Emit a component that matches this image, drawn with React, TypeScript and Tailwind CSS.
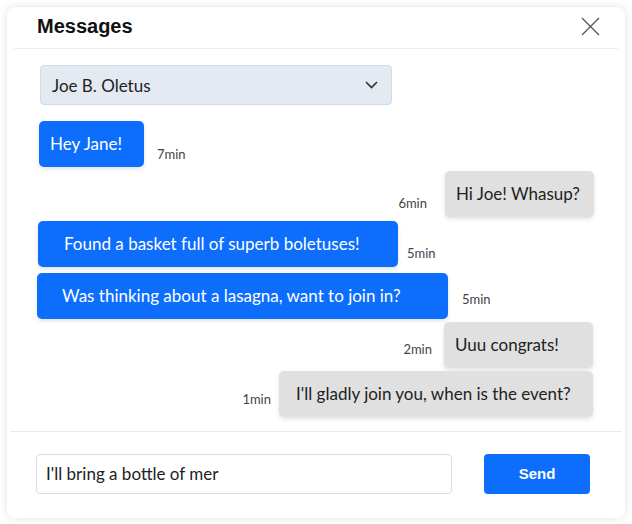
import React, { useState } from "react";

type Msg = {
  mine: boolean;
  text: string;
  time: string;
  box: string; // bubble width + padding
  row: string; // row offset + top margin
  timeCls: string; // gap + bottom offset for the time label
};

const messages: Msg[] = [
  { mine: true, text: "Hey Jane!", time: "7min", box: "w-[105px] pl-[11px]", row: "ml-[32px] mt-[16px]", timeCls: "ml-[13px] mb-[3px]" },
  { mine: false, text: "Hi Joe! Whasup?", time: "6min", box: "w-[149px] pl-[11px]", row: "mr-[31px] mt-[4px]", timeCls: "mr-[18px] mb-[4px]" },
  { mine: true, text: "Found a basket full of superb boletuses!", time: "5min", box: "w-[360px] pl-[26px]", row: "ml-[31px] mt-[4px]", timeCls: "ml-[9px] mb-[4px]" },
  { mine: true, text: "Was thinking about a lasagna, want to join in?", time: "5min", box: "w-[411px] pl-[25px]", row: "ml-[30px] mt-[6px]", timeCls: "ml-[14px] mb-[10px]" },
  { mine: false, text: "Uuu congrats!", time: "2min", box: "w-[149px] pl-[11px]", row: "mr-[32px] mt-[3px]", timeCls: "mr-[12px] mb-[9px]" },
  { mine: false, text: "I'll gladly join you, when is the event?", time: "1min", box: "w-[314px] pl-[17px]", row: "mr-[32px] mt-[3px]", timeCls: "mr-[8px] mb-[8px]" },
];

const font = "font-['Lato','Noto_Sans',sans-serif]";

const App = () => {
  const [draft, setDraft] = useState("I'll bring a bottle of mer");

  return (
    <div className="min-h-screen bg-white p-[7px]">
      <div className="w-[618px] h-[511px] bg-white rounded-lg shadow-[0_0_8px_rgba(0,0,0,0.12)] flex flex-col">
        {/* header */}
        <div className="h-[42px] mx-[7px] border-b border-[#eeeeee] flex items-center justify-between pl-[23px] pr-[18px]">
          <h1 className="font-['Liberation_Sans',Arial,sans-serif] font-bold text-[20px] text-[#111] leading-none pb-[4px]">
            Messages
          </h1>
          <button type="button" className="text-[#555] pb-[3px]">
            <svg width="19" height="19" viewBox="0 0 19 19" fill="none" stroke="currentColor" strokeWidth="1.3">
              <path d="M1 1L18 18M18 1L1 18" />
            </svg>
          </button>
        </div>

        {/* body */}
        <div className={`flex-1 flex flex-col ${font}`}>
          <div className="ml-[33px] mt-[16px] w-[352px] h-[40px] bg-[#e4eaf1] border border-[#d4dbe3] rounded-[4px] flex items-center justify-between pl-[11px] pr-[13px]">
            <span className="text-[17px] text-[#222] pt-[2px]">Joe B. Oletus</span>
            <svg width="13" height="8" viewBox="0 0 13 8" fill="none" stroke="#333" strokeWidth="1.6">
              <path d="M1 1L6.5 6.5L12 1" />
            </svg>
          </div>

          {messages.map((m, i) => (
            <div key={i} className={`flex items-end ${m.mine ? "justify-start" : "justify-end"} ${m.row}`}>
              {!m.mine && <span className={`text-[13px] text-[#444] ${m.timeCls}`}>{m.time}</span>}
              <div
                className={`h-[46px] flex items-center rounded-[5px] text-[17px] shadow-[0_2px_4px_rgba(0,0,0,0.12)] ${m.box} ${
                  m.mine ? "bg-[#0d6efd] text-white" : "bg-[#e0e0e0] text-[#222]"
                }`}
              >
                {m.text}
              </div>
              {m.mine && <span className={`text-[13px] text-[#444] ${m.timeCls}`}>{m.time}</span>}
            </div>
          ))}
        </div>

        {/* footer */}
        <div className="h-[87px] mx-[3px] border-t border-[#e9ecef] flex items-center pl-[26px] pb-[3px]">
          <input
            value={draft}
            onChange={(e) => setDraft(e.target.value)}
            className={`w-[416px] h-[40px] border border-[#d6dde5] rounded-[4px] px-[9px] text-[17px] text-[#222] outline-none ${font}`}
          />
          <button
            type="button"
            className="ml-[32px] w-[106px] h-[40px] bg-[#0d6efd] rounded-[4px] text-white font-bold text-[15px] pt-[2px] font-['Liberation_Sans',Arial,sans-serif]"
          >
            Send
          </button>
        </div>
      </div>
    </div>
  );
};

export default App;
